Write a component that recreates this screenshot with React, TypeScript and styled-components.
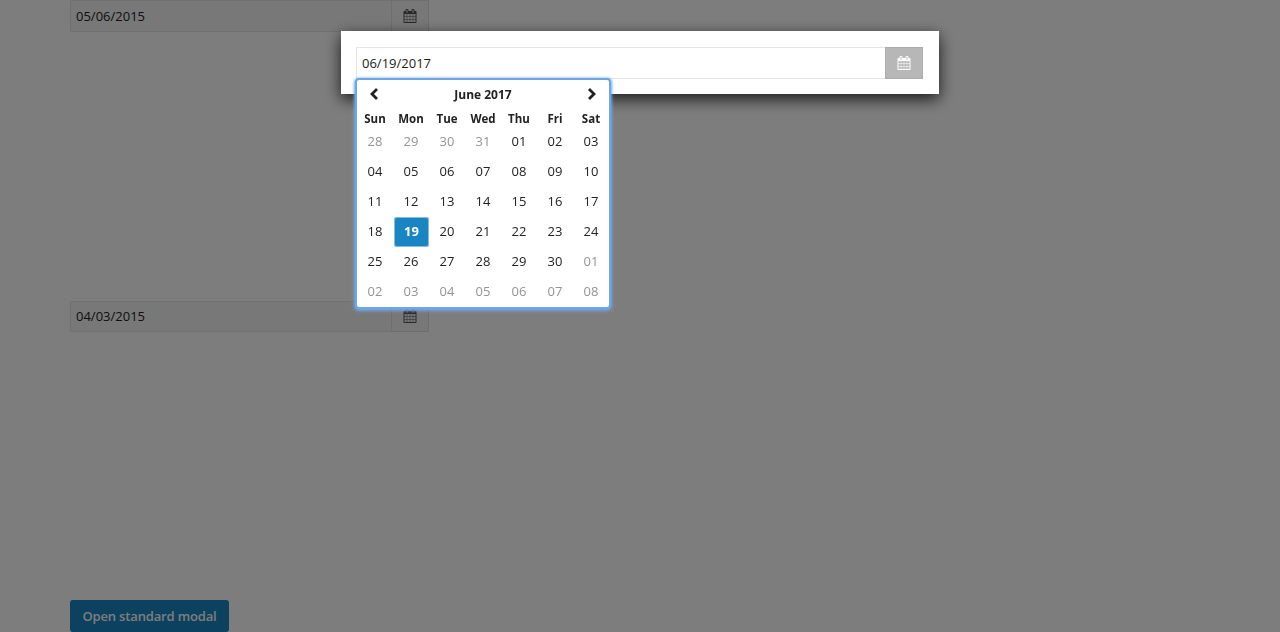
import React from "react";
import styled, { createGlobalStyle } from "styled-components";

const GlobalStyle = createGlobalStyle`
    html, body {
        margin: 0;
        padding: 0;
        background: #fff;
        font-family: "Open Sans", "Liberation Sans", sans-serif;
        font-size: 13px;
        color: #222;
        overflow: hidden;
    }
    * {
        box-sizing: border-box;
    }
`;

const Page = styled.div`
    display: flex;
    flex-direction: column;
    align-items: flex-start;
    width: 1280px;
    height: 632px;
    padding-left: 70px;
`;

const PageField = styled.div<{ $top?: number }>`
    display: flex;
    width: 359px;
    height: 32px;
    margin-top: ${(p) => p.$top ?? 0}px;
`;

const DateInput = styled.div<{ $bg?: string }>`
    flex: 1;
    display: flex;
    align-items: center;
    padding-left: 5px;
    background: ${(p) => p.$bg ?? "#f4f4f4"};
    border: 1px solid #e6e6e6;
    border-right: 0;
    font-size: 13px;
    color: #222;
`;

const Addon = styled.div<{ $active?: boolean }>`
    flex: 0 0 38px;
    display: flex;
    align-items: center;
    justify-content: center;
    background: ${(p) => (p.$active ? "#b7b7b7" : "#f4f4f4")};
    border: 1px solid ${(p) => (p.$active ? "#acacac" : "#e0e0e0")};
    color: ${(p) => (p.$active ? "#fff" : "#555")};
`;

const OpenButton = styled.button`
    margin-top: 268px;
    width: 159px;
    height: 32px;
    padding: 0 0 1px;
    border: 0;
    border-radius: 3px;
    background: #1985c2;
    color: #fff;
    font-family: inherit;
    font-size: 13px;
    font-weight: 600;
    letter-spacing: -0.15px;
`;

const Backdrop = styled.div`
    position: fixed;
    inset: 0;
    background: rgba(0, 0, 0, 0.51);
`;

const Modal = styled.div`
    position: fixed;
    top: 31px;
    left: 341px;
    width: 598px;
    height: 63px;
    padding: 16px 16px 15px 15px;
    background: #fff;
    box-shadow: 0 5px 15px rgba(0, 0, 0, 0.8);
`;

const ModalField = styled.div`
    display: flex;
    height: 32px;
`;

const Picker = styled.div`
    position: absolute;
    top: 47px;
    left: 14px;
    width: 256px;
    height: 231px;
    background: #fff;
    border: 2px solid #6ea6e6;
    border-radius: 4px;
    box-shadow: 0 1px 3px 1px #6ea6e6;
`;

const PickerHeader = styled.div`
    display: flex;
    align-items: center;
    justify-content: space-between;
    height: 30px;
    padding: 0 12px 1px;
    font-size: 12px;
    font-weight: 700;
    color: #222;
`;

const NavButton = styled.span`
    display: flex;
    margin-bottom: 2px;
    color: #222;
`;

const DayGrid = styled.div`
    display: grid;
    grid-template-columns: repeat(7, 36px);
`;

const WeekDay = styled.div`
    display: flex;
    align-items: center;
    justify-content: center;
    height: 16px;
    font-size: 11.5px;
    font-weight: 700;
    color: #222;
`;

const Day = styled.div<{ $muted?: boolean; $selected?: boolean }>`
    display: flex;
    align-items: center;
    justify-content: center;
    height: 30px;
    font-size: 13px;
    font-weight: ${(p) => (p.$selected ? 700 : 400)};
    color: ${(p) => (p.$selected ? "#fff" : p.$muted ? "#939393" : "#222")};
    background: ${(p) => (p.$selected ? "#1985c2" : "transparent")};
    border-radius: ${(p) => (p.$selected ? "3px" : "0")};
    box-shadow: ${(p) => (p.$selected ? "inset 0 0 0 1px #8dbcd9" : "none")};
    margin: ${(p) => (p.$selected ? "1px 0 -1px 1px" : "0")};
    padding-bottom: ${(p) => (p.$selected ? "2px" : "0")};
`;

const CalendarIcon: React.FC = () => (
    <svg width="14" height="14" viewBox="0 0 1792 1792" fill="currentColor">
        <path d="M192 1664h288v-288h-288v288zm352 0h320v-288h-320v288zm-352-352h288v-320h-288v320zm352 0h320v-320h-320v320zm-352-384h288v-288h-288v288zm736 736h320v-288h-320v288zm-384-736h320v-288h-320v288zm768 736h288v-288h-288v288zm-384-352h320v-320h-320v320zm-352-864v-288q0-13-9.5-22.5t-22.5-9.5h-64q-13 0-22.5 9.5t-9.5 22.5v288q0 13 9.5 22.5t22.5 9.5h64q13 0 22.5-9.5t9.5-22.5zm736 864h288v-320h-288v320zm-384-384h320v-288h-320v288zm384 0h288v-288h-288v288zm32-480v-288q0-13-9.5-22.5t-22.5-9.5h-64q-13 0-22.5 9.5t-9.5 22.5v288q0 13 9.5 22.5t22.5 9.5h64q13 0 22.5-9.5t9.5-22.5zm384-64v1280q0 52-38 90t-90 38h-1408q-52 0-90-38t-38-90v-1280q0-52 38-90t90-38h128v-96q0-66 47-113t113-47h64q66 0 113 47t47 113v96h384v-96q0-66 47-113t113-47h64q66 0 113 47t47 113v96h128q52 0 90 38t38 90z" />
    </svg>
);

const Chevron: React.FC<{ dir: "left" | "right" }> = ({ dir }) => (
    <svg width="10" height="12" viewBox="0 0 10 12" fill="none" stroke="currentColor" strokeWidth="2.8">
        <path d={dir === "left" ? "M8 1L3 6l5 5" : "M2 1l5 5-5 5"} />
    </svg>
);

const WEEK_DAYS = ["Sun", "Mon", "Tue", "Wed", "Thu", "Fri", "Sat"];

const DAYS: { label: string; muted?: boolean }[] = [
    ...["28", "29", "30", "31"].map((label) => ({ label, muted: true })),
    ...Array.from({ length: 30 }, (_, i) => ({ label: String(i + 1).padStart(2, "0") })),
    ...["01", "02", "03", "04", "05", "06", "07", "08"].map((label) => ({ label, muted: true })),
];

export default function App() {
    return (
        <>
            <GlobalStyle />
            <Page>
                <PageField>
                    <DateInput>05/06/2015</DateInput>
                    <Addon>
                        <CalendarIcon />
                    </Addon>
                </PageField>
                <PageField $top={269}>
                    <DateInput>04/03/2015</DateInput>
                    <Addon>
                        <CalendarIcon />
                    </Addon>
                </PageField>
                <OpenButton>Open standard modal</OpenButton>
            </Page>
            <Backdrop />
            <Modal>
                <ModalField>
                    <DateInput $bg="#fff">06/19/2017</DateInput>
                    <Addon $active>
                        <CalendarIcon />
                    </Addon>
                </ModalField>
                <Picker>
                    <PickerHeader>
                        <NavButton>
                            <Chevron dir="left" />
                        </NavButton>
                        June 2017
                        <NavButton>
                            <Chevron dir="right" />
                        </NavButton>
                    </PickerHeader>
                    <DayGrid>
                        {WEEK_DAYS.map((d) => (
                            <WeekDay key={d}>{d}</WeekDay>
                        ))}
                        {DAYS.map((d, i) => (
                            <Day key={i} $muted={d.muted} $selected={!d.muted && d.label === "19"}>
                                {d.label}
                            </Day>
                        ))}
                    </DayGrid>
                </Picker>
            </Modal>
        </>
    );
}
